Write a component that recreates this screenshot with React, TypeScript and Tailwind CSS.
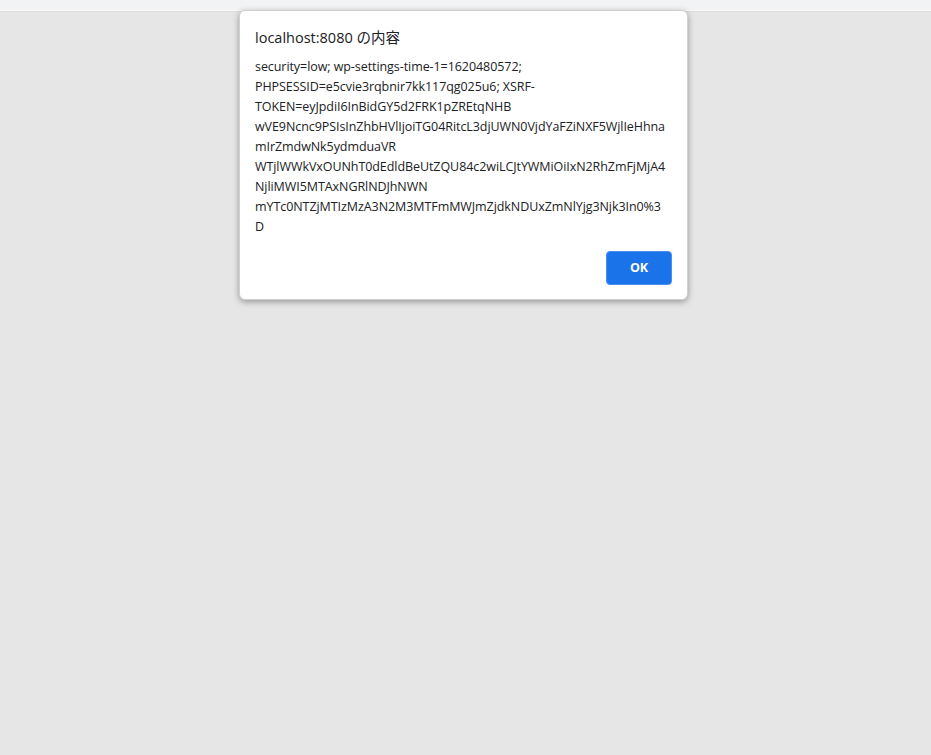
import React from "react";

const lines = [
  "security=low; wp-settings-time-1=1620480572;",
  "PHPSESSID=e5cvie3rqbnir7kk117qg025u6; XSRF-",
  "TOKEN=eyJpdiI6InBidGY5d2FRK1pZREtqNHB",
  "wVE9Ncnc9PSIsInZhbHVlIjoiTG04RitcL3djUWN0VjdYaFZiNXF5WjlIeHhna",
  "mIrZmdwNk5ydmduaVR",
  "WTjlWWkVxOUNhT0dEdldBeUtZQU84c2wiLCJtYWMiOiIxN2RhZmFjMjA4",
  "NjliMWI5MTAxNGRlNDJhNWN",
  "mYTc0NTZjMTIzMzA3N2M3MTFmMWJmZjdkNDUxZmNlYjg3Njk3In0%3",
  "D",
];

export default function App() {
  return (
    <div className="relative h-[755px] w-full overflow-hidden flex flex-col bg-[#e6e6e6] font-['Open_Sans','Noto_Sans_CJK_JP',sans-serif]">
      {/* browser strip */}
      <div className="h-[10px] bg-[#f1f3f4]" />
      <div className="h-[2px] bg-[#fafafa] border-b border-[#dcdcdc]" />
      <div className="flex-1" />

      {/* alert dialog */}
      <div className="absolute left-[239px] top-[10px] w-[449px] h-[290px] bg-white rounded-[6px] shadow-[0_2px_6px_rgba(0,0,0,0.35)] border border-[#d0d0d0] flex flex-col pl-[15px] pr-[15px] pt-[17px]">
        <div className="text-[14.5px] leading-[20px] text-[#202124] whitespace-nowrap">
          localhost:8080 の内容
        </div>
        <div className="mt-[9px] text-[12.5px] leading-[20px] text-[#202124] tracking-[-0.07px]">
          {lines.map((l) => (
            <div key={l} className="whitespace-nowrap">{l}</div>
          ))}
        </div>
        <div className="flex justify-end mt-[14px]">
          <button className="w-[66px] h-[34px] rounded-[4px] bg-[#1a73e8] border border-[#4a8ff0] text-white text-[12.5px] font-bold">
            OK
          </button>
        </div>
      </div>
    </div>
  );
}
